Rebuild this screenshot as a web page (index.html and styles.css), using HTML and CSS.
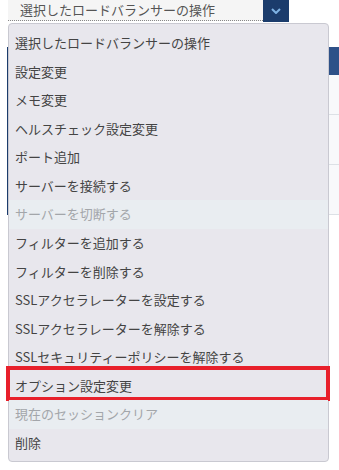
FILE: index.html
```html
<!DOCTYPE html>
<html lang="ja">
<head>
    <meta charset="UTF-8">
    <meta name="viewport" content="width=device-width, initial-scale=1.0">
    <title>ロードバランサー</title>
    <link rel="stylesheet" href="styles.css">
</head>
<body>
    <div class="page">
        <div class="toolbar">
            <div class="select">選択したロードバランサーの操作</div>
            <button class="select-btn" type="button">
                <svg width="10" height="6" viewBox="0 0 10 6"><path d="M1 1 L5 5 L9 1" fill="none" stroke="#7eb2e4" stroke-width="2"/></svg>
            </button>
        </div>

        <div class="table">
            <div class="table-head"></div>
            <div class="table-row first"></div>
            <div class="table-row"></div>
            <div class="table-row"></div>
        </div>

        <ul class="menu">
            <li>選択したロードバランサーの操作</li>
            <li>設定変更</li>
            <li>メモ変更</li>
            <li>ヘルスチェック設定変更</li>
            <li>ポート追加</li>
            <li>サーバーを接続する</li>
            <li class="disabled">サーバーを切断する</li>
            <li>フィルターを追加する</li>
            <li>フィルターを削除する</li>
            <li>SSLアクセラレーターを設定する</li>
            <li>SSLアクセラレーターを解除する</li>
            <li>SSLセキュリティーポリシーを解除する</li>
            <li class="marked">オプション設定変更</li>
            <li class="disabled">現在のセッションクリア</li>
            <li>削除</li>
        </ul>
    </div>
</body>
</html>
```

FILE: styles.css
```css
body {
    margin: 0;
    font-family: "Noto Sans CJK JP", "Noto Sans", sans-serif;
    font-size: 13px;
    color: #444;
    background: #fff;
}
.page {
    position: relative;
    height: 470px;
    overflow: hidden;
}
.toolbar {
    display: flex;
    height: 22px;
    padding-left: 8px;
}
.select {
    width: 255px;
    height: 21px;
    box-sizing: border-box;
    padding: 0 12px;
    line-height: 20px;
    background: #f5f5f5;
    border-bottom: 1px dotted #888;
    color: #555;
}
.select-btn {
    width: 26px;
    height: 22px;
    border: none;
    padding: 0;
    background: #1b3c6c;
    display: flex;
    align-items: center;
    justify-content: center;
}
.table {
    margin: 25px 0 0 7px;
    border-left: 1px solid #1b3c6c;
}
.table-head {
    height: 28px;
    background: #2e5188;
}
.table-row {
    height: 49px;
    background: #f8f9fb;
    border-bottom: 1px solid #dde1e6;
}
.table-row.first {
    height: 39px;
}
.menu {
    position: absolute;
    top: 23px;
    left: 8px;
    width: 321px;
    box-sizing: border-box;
    margin: 0;
    padding: 5px 0 4px;
    list-style: none;
    background: #e8e7ed;
    border: 1px solid #c9c9d1;
    border-radius: 4px;
}
.menu li {
    position: relative;
    height: 28.57px;
    line-height: 28px;
    padding: 0 6px;
    white-space: nowrap;
}
.menu li.disabled {
    background: #e9edf1;
    color: #a3a6aa;
}
.menu li.marked::after {
    content: "";
    position: absolute;
    left: -3px;
    right: -2px;
    top: -6px;
    bottom: -1px;
    border: 4px solid #e8202b;
}
```
